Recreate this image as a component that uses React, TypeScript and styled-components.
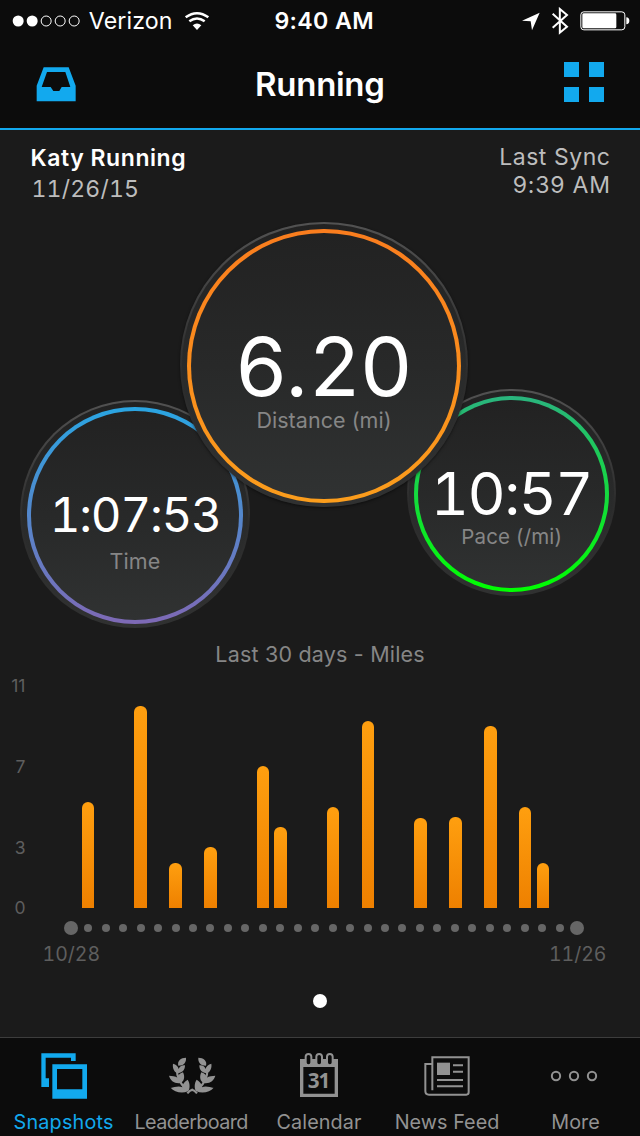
import React from "react";
import styled, { createGlobalStyle } from "styled-components";

const BLUE = "#12a9ee";
const BAR_BG = "#0c0c0c";
const PAGE_BG = "#1b1b1b";
const ICON_GREY = "#929292";

const GlobalStyle = createGlobalStyle`
  * { box-sizing: border-box; }
  body {
    margin: 0;
    background: ${PAGE_BG};
    font-family: Inter, "Liberation Sans", sans-serif;
  }
`;

const Text = styled.div<{
  $size: number;
  $line: number;
  $track?: number;
  $weight?: number;
  $color?: string;
  $indent?: number;
  $tabular?: boolean;
}>`
  font-size: ${(p) => p.$size}px;
  line-height: ${(p) => p.$line}px;
  letter-spacing: ${(p) => p.$track ?? 0}px;
  margin-left: ${(p) => p.$indent ?? 0}px;
  margin-right: ${(p) => -(p.$track ?? 0)}px;
  font-weight: ${(p) => p.$weight ?? 400};
  font-variant-numeric: ${(p) => (p.$tabular ? "tabular-nums" : "normal")};
  color: ${(p) => p.$color ?? "#fff"};
  white-space: nowrap;
`;

const Screen = styled.div`
  display: flex;
  flex-direction: column;
  width: 640px;
  height: 1136px;
  overflow: hidden;
  background: ${PAGE_BG};
`;

/* ---------- top bars ---------- */

const StatusBar = styled.div`
  display: grid;
  grid-template-columns: 1fr auto 1fr;
  align-items: center;
  height: 41px;
  padding: 0 10.3px 0 12.3px;
  background: ${BAR_BG};
`;

const StatusGroup = styled.div<{ $end?: boolean }>`
  display: flex;
  align-items: center;
  justify-content: ${(p) => (p.$end ? "flex-end" : "flex-start")};
`;

const StatusText = styled(Text)`
  padding-top: 1px;
`;

const StatusIcon = styled.svg<{ $gap?: number }>`
  display: block;
  margin-left: ${(p) => p.$gap ?? 0}px;
`;

const NavBar = styled.div`
  display: grid;
  grid-template-columns: 1fr auto 1fr;
  align-items: center;
  height: 89px;
  padding: 0 36px;
  background: ${BAR_BG};
  border-bottom: 2px solid ${BLUE};
`;

const NavTitle = styled(Text)`
  padding-bottom: 2px;
`;

const GridButton = styled.div`
  display: grid;
  grid-template-columns: 15px 15px;
  grid-auto-rows: 15px;
  gap: 10px;
  justify-self: end;
  margin-top: -6px;
`;

const GridCell = styled.span`
  background: ${BLUE};
`;

/* ---------- activity info ---------- */

const InfoRow = styled.div`
  display: flex;
  justify-content: space-between;
  height: 92px;
  padding: 0 30px;
`;

const InfoColumn = styled.div<{ $top: number; $end?: boolean }>`
  display: flex;
  flex-direction: column;
  align-items: ${(p) => (p.$end ? "flex-end" : "flex-start")};
  padding-top: ${(p) => p.$top}px;
`;

/* ---------- dials ---------- */

const Dials = styled.div`
  display: flex;
  align-items: flex-start;
  height: 406px;
  padding-left: 20px;
`;

const Bezel = styled.div<{
  $w: number;
  $h: number;
  $top: number;
  $overlap: number;
  $raised?: boolean;
}>`
  position: relative;
  z-index: ${(p) => (p.$raised ? 1 : 0)};
  flex: none;
  display: flex;
  width: ${(p) => p.$w}px;
  height: ${(p) => p.$h}px;
  margin-top: ${(p) => p.$top}px;
  margin-left: ${(p) => -p.$overlap}px;
  padding: 5px 5px 2px;
  border: 2px solid transparent;
  border-radius: 50%;
  background:
    linear-gradient(#222222, #292a2a 50%, #303131) padding-box,
    linear-gradient(#525252, #3d3d3d 30%, #2c2c2c 55%, #303131) border-box;
  box-shadow: ${(p) => (p.$raised ? "0 1px 3px rgba(0, 0, 0, 0.5)" : "none")};
`;

const Face = styled.div<{ $from: string; $to: string; $pad: number }>`
  flex: 1;
  display: flex;
  flex-direction: column;
  align-items: center;
  padding-top: ${(p) => p.$pad}px;
  border: 4px solid transparent;
  border-radius: 50%;
  background:
    linear-gradient(#222222, #282929 50%, #303232) padding-box,
    linear-gradient(${(p) => p.$from}, ${(p) => p.$to}) border-box;
`;

const DialLabel = styled(Text)<{ $gap?: number }>`
  margin-top: ${(p) => p.$gap ?? 0}px;
`;

/* ---------- chart ---------- */

const ChartTitle = styled.div`
  display: flex;
  justify-content: center;
  height: 48px;
  padding-top: 12px;
`;

const Plot = styled.div`
  display: flex;
  height: 232px;
`;

const YAxis = styled.div`
  display: grid;
  grid-template-rows: 81px 81px 60px 20px;
  justify-items: end;
  width: 25.5px;
`;

const Bars = styled.div`
  display: flex;
  align-items: flex-end;
  width: 524.4px;
  margin-left: 36.45px;
`;

const Slot = styled.div`
  flex: 1 1 0;
  display: flex;
  align-items: center;
  justify-content: center;
`;

const Bar = styled.div`
  width: 12.4px;
  border-radius: 6px 6px 0 0;
  background: linear-gradient(#ff9f0f, #ee8000);
`;

const Timeline = styled.div`
  display: flex;
  width: 523.5px;
  height: 16px;
  margin: 12px 0 8px 62.1px;
`;

const Dot = styled.span<{ $size: number; $color?: string }>`
  flex: none;
  width: ${(p) => p.$size}px;
  height: ${(p) => p.$size}px;
  border-radius: 50%;
  background: ${(p) => p.$color ?? "#666"};
`;

const DateRange = styled.div`
  display: flex;
  justify-content: space-between;
  height: 50px;
  padding: 0 33.5px 0 42.5px;
`;

const Pager = styled.div`
  display: flex;
  justify-content: center;
  height: 43px;
`;

/* ---------- tab bar ---------- */

const TabBar = styled.div`
  display: flex;
  height: 99px;
  border-top: 1px solid #3d3d3d;
  background: ${BAR_BG};
`;

const Tab = styled.div`
  display: flex;
  flex-direction: column;
  align-items: center;
  width: 128px;
  padding-top: 10px;
`;

const TabIcon = styled.svg`
  display: block;
  flex: none;
  width: 128px;
  height: 52px;
  margin-bottom: 10px;
`;

const DAYS = 30;
const MILES: Record<number, number> = {
  1: 5.25, 4: 10, 6: 2.23, 8: 3.02, 11: 7.03, 12: 4.01, 15: 5,
  17: 9.26, 20: 4.46, 22: 4.51, 24: 9.01, 26: 5, 27: 2.23,
};
const PX_PER_MILE = 20.2;
const days = Array.from({ length: DAYS }, (_, i) => i);

const LaurelBranch = () => (
  <>
    <path d="M558 83C542 83 531 93 535 107C552 107 559 97 558 83Z" />
    <path d="M519 101C528 103 535 109 536 117C538 109 546 105 555 106C555 120 547 129 532 130C521 124 517 113 519 101Z" />
    <path d="M507 137C516 138 526 137 533 143C535 134 541 129 549 127C556 141 552 155 542 159C524 162 511 152 507 137Z" />
    <path d="M512 174C523 172 536 166 547 172C547 162 554 154 563 149C571 160 570 178 564 184C545 192 522 186 512 173Z" />
    <path
      d="M531 120Q530 148 556 176M562 190Q569 181 578 179"
      fill="none"
      stroke={ICON_GREY}
      strokeWidth="6.500"
    />
  </>
);

export default function App() {
  return (
    <Screen>
      <GlobalStyle />

      <StatusBar>
        <StatusGroup>
          <StatusIcon width="69" height="12" viewBox="37 44 207 36">
            <g fill="#fff">
              <circle cx="55.5" cy="62" r="16.5" />
              <circle cx="97.5" cy="62" r="16.5" />
            </g>
            <g fill="none" stroke="#fff" strokeWidth="3">
              <circle cx="139.5" cy="62" r="15" />
              <circle cx="181.5" cy="62" r="15" />
              <circle cx="223.5" cy="62" r="15" />
            </g>
          </StatusIcon>
          <StatusText $size={23.2} $line={41} $track={0.1} $indent={7.5}>
            Verizon
          </StatusText>
          <StatusIcon $gap={11} width="26" height="20" viewBox="551 30 78 60">
            <g fill="none" stroke="#fff" strokeWidth="7.5">
              <path d="M556 49Q590 24 624 49" />
              <path d="M567 61Q590 44 613 61" />
            </g>
            <path d="M577 73Q590 62 603 73L590 87Z" fill="#fff" />
          </StatusIcon>
        </StatusGroup>
        <StatusText $size={23.2} $line={41} $track={0.35} $weight={600} $indent={6}>
          9:40 AM
        </StatusText>
        <StatusGroup $end>
          <StatusIcon width="18" height="19" viewBox="607 34 54 57">
            <path d="M660 36L607 60L633 62L637 89Z" fill="#fff" />
          </StatusIcon>
          <StatusIcon $gap={10.7} width="18" height="28" viewBox="693 20 54 84">
            <path
              d="M698 40L741 79L719.5 97V26L741 44L698 82"
              fill="none"
              stroke="#fff"
              strokeWidth="6"
            />
          </StatusIcon>
          <StatusIcon $gap={10.7} width="50" height="20" viewBox="779 32 150 60">
            <rect x="781.5" y="34.5" width="132" height="54" rx="9" fill="none" stroke="#fff" strokeWidth="3" />
            <rect x="786" y="39" width="102" height="45" rx="4" fill="#fff" />
            <path d="M918 51Q927 52 927 61Q927 71 918 72Z" fill="#fff" />
          </StatusIcon>
        </StatusGroup>
      </StatusBar>

      <NavBar>
        <StatusIcon width="41" height="36" viewBox="108 200 123 108">
          <path
            d="M131 201H206L227 256V303H110V256ZM141 215L125 260H152L160 272H178L185 260H211L196 215Z"
            fill={BLUE}
            fillRule="evenodd"
          />
        </StatusIcon>
        <NavTitle $size={33} $line={84} $track={-0.3} $weight={600}>
          Running
        </NavTitle>
        <GridButton>
          <GridCell />
          <GridCell />
          <GridCell />
          <GridCell />
        </GridButton>
      </NavBar>

      <InfoRow>
        <InfoColumn $top={13}>
          <Text $size={23} $line={31} $track={0.55} $weight={600} $indent={0.5}>
            Katy Running
          </Text>
          <Text $size={23} $line={31} $track={0.2} $indent={1.5} $color="#bdbdbd" $tabular>
            11/26/15
          </Text>
        </InfoColumn>
        <InfoColumn $top={13} $end>
          <Text $size={23} $line={28} $track={0.55} $color="#bdbdbd">
            Last Sync
          </Text>
          <Text $size={23} $line={28} $track={0.8} $color="#bdbdbd">
            9:39 AM
          </Text>
        </InfoColumn>
      </InfoRow>

      <Dials>
        <Bezel $w={229.7} $h={227.7} $top={178} $overlap={0}>
          <Face $from="#2aa5e2" $to="#7e69b5" $pad={79}>
            <Text $size={47.5} $line={50} $track={-1.2} $indent={2} $tabular>
              1:07:53
            </Text>
            <DialLabel $gap={8} $size={21.5} $line={26} $track={0.1} $color="#868686">
              Time
            </DialLabel>
          </Face>
        </Bezel>
        <Bezel $w={287.4} $h={285.4} $top={0} $overlap={69.4} $raised>
          <Face $from="#fa7d1e" $to="#fb9d1c" $pad={93.5}>
            <Text $size={81.5} $line={80} $track={1.2}>
              6.20
            </Text>
            <DialLabel $size={21.5} $line={26} $track={0.05} $color="#868686">
              Distance (mi)
            </DialLabel>
          </Face>
        </Bezel>
        <Bezel $w={208.7} $h={207.6} $top={166.7} $overlap={60.4}>
          <Face $from="#2ab47e" $to="#00ff00" $pad={64}>
            <Text $size={59} $line={60} $track={-1.5} $indent={1} $tabular>
              10:57
            </Text>
            <DialLabel $size={20.5} $line={26} $track={0.15} $color="#868686">
              Pace (/mi)
            </DialLabel>
          </Face>
        </Bezel>
      </Dials>

      <ChartTitle>
        <Text $size={21.5} $line={28} $track={0.2} $color="#868686">
          Last 30 days - Miles
        </Text>
      </ChartTitle>
      <Plot>
        <YAxis>
          {[11, 7, 3, 0].map((tick) => (
            <Text key={tick} $size={17.5} $line={20} $color="#5e5e5e">
              {tick}
            </Text>
          ))}
        </YAxis>
        <Bars>
          {days.map((day) => (
            <Slot key={day}>
              {MILES[day] !== undefined && (
                <Bar style={{ height: Math.round(MILES[day] * PX_PER_MILE) }} />
              )}
            </Slot>
          ))}
        </Bars>
      </Plot>
      <Timeline>
        {days.map((day) => (
          <Slot key={day}>
            <Dot $size={day === 0 || day === DAYS - 1 ? 14 : 8} />
          </Slot>
        ))}
      </Timeline>
      <DateRange>
        <Text $size={19.5} $line={20} $color="#5e5e5e" $tabular>
          10/28
        </Text>
        <Text $size={19.5} $line={20} $color="#5e5e5e" $tabular>
          11/26
        </Text>
      </DateRange>
      <Pager>
        <Dot $size={14} $color="#fff" />
      </Pager>

      <TabBar>
        <Tab>
          <TabIcon viewBox="0 54 384 156" fill={BLUE}>
            <path d="M124 70H227V93H213V83H137V145H147V171H124Z" />
            <path d="M157 103H261V206H157ZM171 117V178H247V117Z" fillRule="evenodd" />
          </TabIcon>
          <Text $size={19.8} $line={24} $track={0.2} $indent={-1} $color={BLUE}>
            Snapshots
          </Text>
        </Tab>
        <Tab>
          <TabIcon viewBox="384 54 384 156" fill={ICON_GREY}>
            <LaurelBranch />
            <g transform="translate(1153 0) scale(-1 1)">
              <LaurelBranch />
            </g>
          </TabIcon>
          <Text $size={19.8} $line={24} $track={-0.6} $indent={-1} $color={ICON_GREY}>
            Leaderboard
          </Text>
        </Tab>
        <Tab>
          <TabIcon viewBox="18 54 384 156" fill={ICON_GREY}>
            <path d="M150 87H264V201H150ZM160 111V191H254V111Z" fillRule="evenodd" />
            <g fill={BAR_BG} stroke={ICON_GREY} strokeWidth="6">
              <rect x="167" y="72" width="17" height="34" rx="8.5" />
              <rect x="199" y="72" width="17" height="34" rx="8.5" />
              <rect x="231" y="72" width="17" height="34" rx="8.5" />
            </g>
            <text
              x="205.5"
              y="174.5"
              textAnchor="middle"
              fontFamily="'Noto Sans', sans-serif"
              fontWeight="700"
              fontSize="62"
              letterSpacing="-3"
            >
              31
            </text>
          </TabIcon>
          <Text $size={19.8} $line={24} $track={0.1} $indent={-2} $color={ICON_GREY}>
            Calendar
          </Text>
        </Tab>
        <Tab>
          <TabIcon viewBox="402 54 384 156" fill={ICON_GREY}>
            <g fill="none" stroke={ICON_GREY} strokeWidth="6">
              <path d="M547 181V82H656V187Q656 194 649 194H537Q526 194 526 183V102H547" />
              <path d="M609 106H639M609 125.500H639M561 150H639M561 169H639" />
            </g>
            <rect x="561" y="98" width="39" height="37" />
          </TabIcon>
          <Text $size={19.8} $line={24} $track={0.05} $indent={-2} $color={ICON_GREY}>
            News Feed
          </Text>
        </Tab>
        <Tab>
          <TabIcon viewBox="36 54 384 156" fill="none" stroke={ICON_GREY} strokeWidth="6">
            <circle cx="168" cy="138" r="12.500" />
            <circle cx="222" cy="138" r="12.500" />
            <circle cx="276" cy="138" r="12.500" />
          </TabIcon>
          <Text $size={19.8} $line={24} $indent={-1} $color={ICON_GREY}>
            More
          </Text>
        </Tab>
      </TabBar>
    </Screen>
  );
}
